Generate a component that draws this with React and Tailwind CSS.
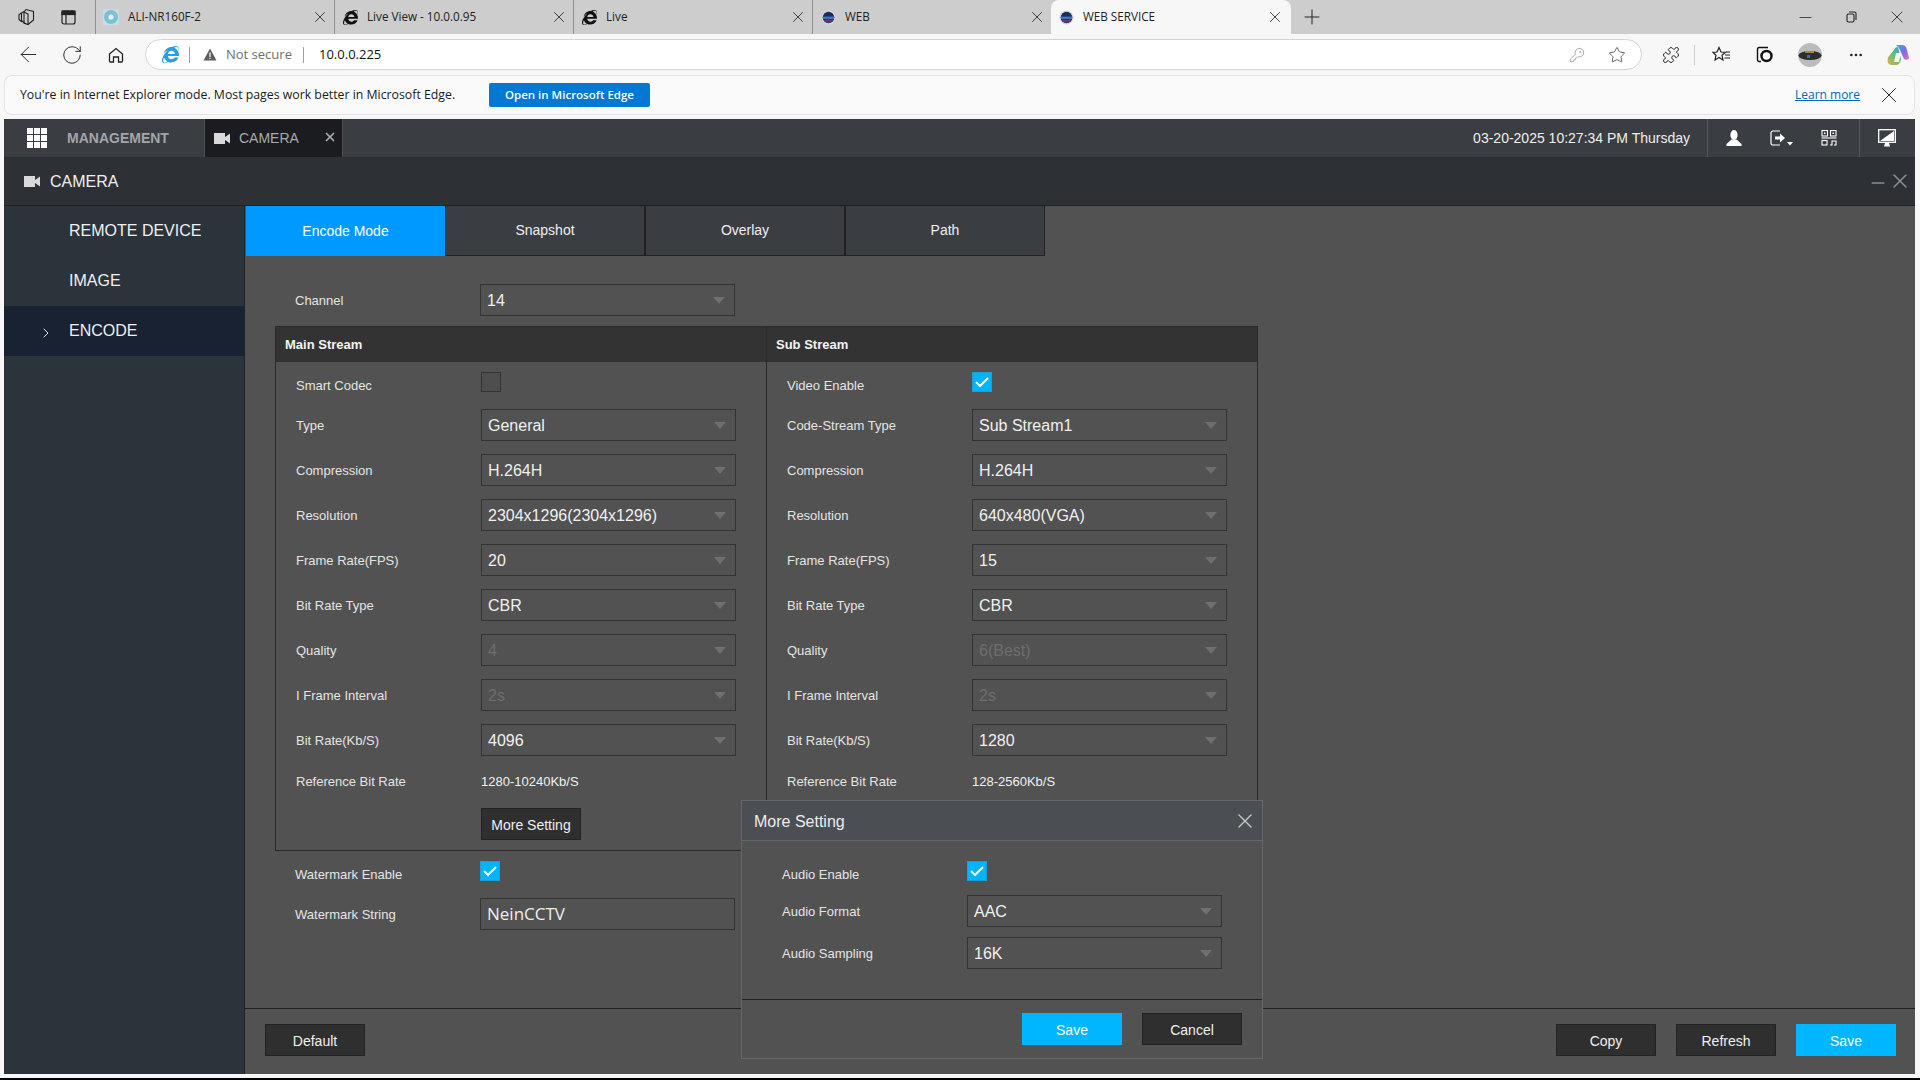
import { ArrowLeft, RotateCw, Plus, X, Minus, Star, KeyRound, Puzzle, ChevronRight, MoreHorizontal } from "lucide-react";
import { FaInternetExplorer } from "react-icons/fa";

const mainRows = [
  { label: "Type", value: "General" },
  { label: "Compression", value: "H.264H" },
  { label: "Resolution", value: "2304x1296(2304x1296)" },
  { label: "Frame Rate(FPS)", value: "20" },
  { label: "Bit Rate Type", value: "CBR" },
  { label: "Quality", value: "4", disabled: true },
  { label: "I Frame Interval", value: "2s", disabled: true },
  { label: "Bit Rate(Kb/S)", value: "4096" },
];

const subRows = [
  { label: "Code-Stream Type", value: "Sub Stream1" },
  { label: "Compression", value: "H.264H" },
  { label: "Resolution", value: "640x480(VGA)" },
  { label: "Frame Rate(FPS)", value: "15" },
  { label: "Bit Rate Type", value: "CBR" },
  { label: "Quality", value: "6(Best)", disabled: true },
  { label: "I Frame Interval", value: "2s", disabled: true },
  { label: "Bit Rate(Kb/S)", value: "1280" },
];

const SphereIcon = () => (
  <svg width="15" height="15" viewBox="0 0 16 16">
    <circle cx="8" cy="8" r="7.5" fill="#d8d8d8" />
    <circle cx="8" cy="8" r="6.2" fill="#1c2c58" />
    <rect x="2" y="7" width="12" height="2.5" fill="#3f78c8" />
    <path d="M2.5 10 a6 6 0 0 0 11 0z" fill="#5b3a6e" />
  </svg>
);

const DiscIcon = () => (
  <svg width="16" height="16" viewBox="0 0 16 16">
    <rect width="16" height="16" fill="#c8dde3" />
    <circle cx="8" cy="8" r="7" fill="#7cc0d4" />
    <circle cx="8" cy="8" r="2.6" fill="#e6eef0" />
  </svg>
);

const BrowserTab = ({ icon, title, active }) => (
  <div
    className={
      active
        ? "w-[240px] h-[34px] flex items-center pl-[6px] pr-[7px] bg-[#f7f7f7] rounded-t-lg"
        : "w-[239px] h-[34px] flex items-center pl-[6px] pr-[5px] border-l border-[#8f8f8f] bg-clip-content"
    }
  >
    <div className="w-[18px] flex justify-center">{icon}</div>
    <span className="flex-1 ml-[8px] text-[11.7px] text-[#222222]">{title}</span>
    <X size={18} strokeWidth={1.1} className="text-[#222222]" />
  </div>
);

const BrowserChrome = () => (
  <div className="h-[119px] font-['Open_Sans',sans-serif]">
    <div className="h-[34px] bg-[#cdcdcd] flex items-center">
      <div className="w-[95px] flex items-center pl-[17px] gap-[26px]">
        <svg width="18" height="18" viewBox="0 0 18 18" fill="none" stroke="#222222" strokeWidth="1.1">
          <path d="M7 4 L9 1.5 L16.5 3.5 V12 L11 16.5 L7 15 Z" />
          <path d="M7 4 L11 6 V16.5" />
          <path d="M7 3.5 L4.5 5 V12.5 L8 15.5" />
          <path d="M4.5 5 L2 6.5 V11.5 L5 14" />
        </svg>
        <svg width="15" height="15" viewBox="0 0 15 15" fill="none" stroke="#222222" strokeWidth="1.2">
          <rect x="1" y="1" width="13" height="13" rx="2" />
          <rect x="1" y="1" width="13" height="3.5" fill="#222222" />
          <path d="M5 4.5 V14" />
        </svg>
      </div>
      <BrowserTab icon={<DiscIcon />} title="ALI-NR160F-2" />
      <BrowserTab icon={<FaInternetExplorer size={15} className="text-[#111111]" />} title="Live View - 10.0.0.95" />
      <BrowserTab icon={<FaInternetExplorer size={15} className="text-[#111111]" />} title="Live" />
      <BrowserTab icon={<SphereIcon />} title="WEB" />
      <BrowserTab icon={<SphereIcon />} title="WEB SERVICE" active />
      <Plus size={24} strokeWidth={1} className="ml-[9px] text-[#222222]" />
      <div className="flex-1" />
      <div className="flex items-center text-[#222222]">
        <div className="w-[46px] flex justify-center">
          <Minus size={19} strokeWidth={1} />
        </div>
        <div className="w-[46px] flex justify-center">
          <svg width="11" height="12" viewBox="0 0 11 12" fill="none" stroke="#222222" strokeWidth="1.1">
            <rect x="1" y="3" width="7" height="8" rx="1.5" />
            <path d="M3 1 H8.5 A1.5 1.5 0 0 1 10 2.5 V9" />
          </svg>
        </div>
        <div className="w-[46px] flex justify-center">
          <X size={20} strokeWidth={1} />
        </div>
      </div>
    </div>
    <div className="h-[41px] bg-[#f7f7f7] flex items-center">
      <div className="w-[145px] flex items-center pl-[6px] text-[#222222]">
        <div className="w-[44px] flex justify-center">
          <ArrowLeft size={25} strokeWidth={0.9} />
        </div>
        <div className="w-[44px] flex justify-center">
          <RotateCw size={22} strokeWidth={1} />
        </div>
        <div className="w-[44px] flex justify-center">
          <svg width="18" height="18" viewBox="0 0 18 18" fill="none" stroke="#222222" strokeWidth="1.3">
            <path d="M2.5 8 L9 2.5 L15.5 8 V15 A1 1 0 0 1 14.5 16 H11.5 V11 H6.5 V16 H3.5 A1 1 0 0 1 2.5 15z" />
          </svg>
        </div>
      </div>
      <div className="w-[1497px] h-[31px] bg-white border border-[#d4d4d4] rounded-full flex items-center">
        <div className="w-[33px] flex justify-end">
          <FaInternetExplorer size={17} className="text-[#2a9fe0]" />
        </div>
        <div className="w-px h-[16px] bg-[#a0a0a0] ml-[10px]" />
        <svg className="ml-[13px]" width="14" height="13" viewBox="0 0 14 13">
          <path d="M7 0.5 L13.5 12.5 H0.5z" fill="#5e5e5e" />
          <rect x="6.4" y="4.5" width="1.2" height="4.5" fill="#ffffff" />
          <rect x="6.4" y="9.8" width="1.2" height="1.2" fill="#ffffff" />
        </svg>
        <span className="ml-[9px] w-[77px] text-[13px] text-[#6e6e6e]">Not secure</span>
        <div className="w-px h-[16px] bg-[#a0a0a0]" />
        <span className="ml-[15px] text-[13px] text-[#111111]">10.0.0.225</span>
        <div className="flex-1" />
        <KeyRound size={16} strokeWidth={1.1} className="text-[#8a8a8a]" />
        <Star size={18} strokeWidth={1.1} className="ml-[23px] mr-[15px] text-[#444444]" />
      </div>
      <div className="flex-1 flex items-center text-[#222222]">
        <Puzzle size={18} strokeWidth={1.3} className="ml-[20px]" />
        <div className="w-px h-[20px] bg-[#cfcfcf] ml-[14px]" />
        <svg className="ml-[17px]" width="19" height="17" viewBox="0 0 19 17" fill="none" stroke="#222222" strokeWidth="1.2">
          <path d="M7 1.5 L9 6 L13.5 6.3 L10 9.3 L11 14 L7 11.5 L3 14 L4 9.3 L0.8 6.3 L5 6z" />
          <path d="M13 9 H18 M12.5 12 H18 M14 6 H18" />
        </svg>
        <svg className="ml-[25px]" width="17" height="17" viewBox="0 0 17 17" fill="none" stroke="#111111" strokeWidth="1.4">
          <path d="M5 15.5 H3 A1.5 1.5 0 0 1 1.5 14 V3 A1.5 1.5 0 0 1 3 1.5 H12" />
          <circle cx="10.5" cy="10" r="5" strokeWidth="2.4" />
        </svg>
        <svg className="ml-[25px]" width="24" height="24" viewBox="0 0 24 24">
          <circle cx="12" cy="12" r="12" fill="#bcbcbc" />
          <ellipse cx="12" cy="12.5" rx="11.5" ry="4.5" fill="#2e2e2e" />
          <rect x="7" y="8" width="9" height="2" fill="#9a8a3a" />
          <rect x="9" y="12" width="3" height="3" fill="#3c6ea8" />
        </svg>
        <MoreHorizontal size={16} className="ml-[26px]" />
        <svg className="ml-[23px]" width="22" height="22" viewBox="0 0 22 22">
          <defs>
            <linearGradient id="cop" x1="0" y1="0" x2="1" y2="1">
              <stop offset="0" stopColor="#2fb6e8" />
              <stop offset="0.5" stopColor="#7a6ee6" />
              <stop offset="1" stopColor="#ef6aa8" />
            </linearGradient>
            <linearGradient id="cop2" x1="0" y1="1" x2="1" y2="0">
              <stop offset="0" stopColor="#f5a742" />
              <stop offset="0.5" stopColor="#5fc46a" />
              <stop offset="1" stopColor="#2f9fe8" />
            </linearGradient>
          </defs>
          <path d="M9 1 H15 Q19 1 20 6 L22 14 Q21 17 17 15 L13 6 Q12 3 9 1z" fill="url(#cop)" />
          <path d="M7 6 Q8 3 11 3 L14 15 Q13 21 9 21 H5 Q1 21 0.5 17 Q0 14 2 12z" fill="url(#cop2)" />
          <path d="M9 9 H14 L12 18 H7z" fill="#ffffff" opacity="0.9" />
        </svg>
      </div>
    </div>
    <div className="h-[40px] mx-[4px] mr-[5px] bg-[#fafafa] border border-[#e4e4e4] rounded-lg flex items-center">
      <span className="ml-[15px] w-[469px] text-[12.3px] text-[#1a1a1a]">You're in Internet Explorer mode. Most pages work better in Microsoft Edge.</span>
      <div className="w-[161px] h-[24px] bg-[#0078d4] rounded-[2px] flex items-center justify-center text-[11.5px] text-white font-semibold">Open in Microsoft Edge</div>
      <div className="flex-1" />
      <span className="text-[12px] text-[#0066bf] underline">Learn more</span>
      <X size={26} strokeWidth={0.9} className="ml-[16px] mr-[12px] text-[#222222]" />
    </div>
    <div className="h-[4px]" />
  </div>
);

const CameraIcon = ({ className }) => (
  <svg className={className} width="16" height="11" viewBox="0 0 16 11" fill="#d9d9d9">
    <rect x="0" y="0" width="11" height="11" />
    <path d="M11 4 L16 0.5 V10.5 L11 7z" />
  </svg>
);

const AppNav = () => (
  <div className="h-[38px] bg-[#3a3e42] flex items-stretch">
    <div className="w-[200px] flex items-center pl-[23px]">
      <div className="grid grid-cols-3 gap-[1px] w-[20px] h-[20px]">
        {[0, 1, 2, 3, 4, 5, 6, 7, 8].map((i) => (
          <div key={i} className="bg-white" />
        ))}
      </div>
      <span className="ml-[20px] pt-[1px] text-[14px] font-bold text-[#a3a5a7]">MANAGEMENT</span>
    </div>
    <div className="w-[139px] bg-[#1b1c1f] border-x border-[#4d5155] flex items-center pl-[9px]">
      <CameraIcon />
      <span className="ml-[9px] pt-[1px] text-[14px] text-[#a8aaac] flex-1">CAMERA</span>
      <X size={14} strokeWidth={3} className="mr-[5px] mb-[2px] text-[#a8aaac]" />
    </div>
    <div className="flex-1 flex items-center justify-end pr-[17px] text-[14px] text-[#eeeeee]">03-20-2025 10:27:34 PM Thursday</div>
    <div className="w-[153px] border-x border-[#55595d] flex items-center text-white">
      <svg className="ml-[18px]" width="16" height="16" viewBox="0 0 16 16" fill="#ffffff">
        <ellipse cx="8" cy="5" rx="3.6" ry="5" />
        <path d="M5.5 9.5 L0.5 14 V16 H15.5 V14 L10.5 9.5z" />
      </svg>
      <svg className="ml-[28px]" width="24" height="16" viewBox="0 0 24 16" fill="none" stroke="#ffffff" strokeWidth="1.2">
        <path d="M10 1 H3 A2 2 0 0 0 1 3 V13 A2 2 0 0 0 3 15 H10" />
        <path d="M5 6.5 H10 V3.5 L15 8 L10 12.5 V9.5 H5z" fill="#ffffff" stroke="none" />
        <path d="M17 12 H23 L20 15.5z" fill="#ffffff" stroke="none" />
      </svg>
      <svg className="ml-[27px]" width="16" height="16" viewBox="0 0 16 16" fill="none" stroke="#ffffff" strokeWidth="1.1">
        <rect x="1" y="0.5" width="5.5" height="5.5" />
        <rect x="9.5" y="0.5" width="5.5" height="5.5" />
        <rect x="3" y="2.5" width="1.5" height="1.5" fill="#ffffff" stroke="none" />
        <rect x="11.5" y="2.5" width="1.5" height="1.5" fill="#ffffff" stroke="none" />
        <path d="M0.5 8 H15.5" />
        <rect x="1" y="10.5" width="5" height="4.5" />
        <path d="M9 15 H11 V11 H15 V15 H13" />
      </svg>
    </div>
    <div className="flex-1 max-w-[55px] flex items-center justify-center pr-[2px]">
      <svg width="18" height="18" viewBox="0 0 18 18" fill="none">
        <rect x="0.7" y="0.7" width="16.6" height="12.6" stroke="#ffffff" strokeWidth="1.3" />
        <path d="M2 12 L16 2 V12z" fill="#ffffff" />
        <path d="M7 14 H11 L12 17.5 H6z" fill="#ffffff" />
      </svg>
    </div>
  </div>
);

const SelectBox = ({ value, disabled }) => (
  <div className="w-[255px] h-[32px] border border-[#333333] flex items-center pl-[6px] pr-[9px] text-[16px] justify-between">
    <span className={"pt-[1px] " + (disabled ? "text-[#6e6e6e]" : "text-[#f0f0f0]")}>{value}</span>
    <svg width="12" height="7" viewBox="0 0 12 7">
      <path d="M0 0 H12 L6 7z" fill="#6f6f6f" />
    </svg>
  </div>
);

const CheckBox = ({ checked }) =>
  checked ? (
    <div className="w-[20px] h-[20px] bg-[#00b4ff] border border-[#1d9fd6] flex items-center justify-center">
      <svg width="14" height="10" viewBox="0 0 14 10" fill="none" stroke="#ffffff" strokeWidth="2">
        <path d="M1 5 L5 9 L13 1" />
      </svg>
    </div>
  ) : (
    <div className="w-[20px] h-[20px] bg-[#4e4e4e] border border-[#333333]" />
  );

const Label = ({ children }) => <span className="w-[185px] shrink-0 pt-[1px] text-[13px] text-[#e4e4e4]">{children}</span>;

const CheckRow = ({ label, checked }) => (
  <div className="flex items-start h-[20px]">
    <span className="w-[185px] shrink-0 text-[13px] leading-[15px] pt-[6px] text-[#e4e4e4]">{label}</span>
    <CheckBox checked={checked} />
  </div>
);

const DarkButton = ({ children }) => (
  <div className="w-[100px] h-[32px] pt-[2px] bg-[#2f2f2f] border border-[#222222] flex items-center justify-center text-[14px] text-[#f0f0f0]">
    {children}
  </div>
);

const BlueButton = ({ children }) => (
  <div className="w-[100px] h-[32px] pt-[2px] bg-[#00b7ff] flex items-center justify-center text-[14px] text-white">{children}</div>
);

const StreamColumn = ({ title, checkLabel, checked, rows, refRate, more }) => (
  <div className="w-[490px]">
    <div className="h-[35px] bg-[#333333] pl-[9px] flex items-center text-[13px] font-bold text-[#f4f4f4]">{title}</div>
    <div className="pt-[10px] pl-[20px]">
      <CheckRow label={checkLabel} checked={checked} />
      <div className="mt-[17px] flex flex-col gap-[13px]">
        {rows.map((r) => (
          <div key={r.label} className="flex items-center">
            <Label>{r.label}</Label>
            <SelectBox value={r.value} disabled={r.disabled} />
          </div>
        ))}
      </div>
      <div className="mt-[13px] h-[24px] flex items-center">
        <Label>Reference Bit Rate</Label>
        <span className="pt-[1px] text-[13px] text-[#f0f0f0]">{refRate}</span>
      </div>
      <div className="mt-[15px] h-[32px] pl-[185px]">{more && <DarkButton>More Setting</DarkButton>}</div>
      <div className="h-[10px]" />
    </div>
  </div>
);

const MoreSettingDialog = () => (
  <div className="absolute left-[741px] top-[800px] w-[522px] h-[259px] bg-[#525252] border border-[#62666e] flex flex-col">
    <div className="h-[40px] bg-[#4b4f54] border-b border-[#62666e] flex items-center justify-between pl-[12px] pr-[5px] text-[16px] text-[#ececec]">
      <span className="pt-[2px]">More Setting</span>
      <X size={24} strokeWidth={1.4} className="text-[#c4c4c4]" />
    </div>
    <div className="flex-1 pt-[20px] pl-[40px]">
      <CheckRow label="Audio Enable" checked />
      <div className="mt-[14px] flex items-center">
        <Label>Audio Format</Label>
        <SelectBox value="AAC" />
      </div>
      <div className="mt-[10px] flex items-center">
        <Label>Audio Sampling</Label>
        <SelectBox value="16K" />
      </div>
    </div>
    <div className="h-[59px] border-t border-[#222222] flex justify-end gap-[20px] pt-[13px] pr-[20px]">
      <BlueButton>Save</BlueButton>
      <DarkButton>Cancel</DarkButton>
    </div>
  </div>
);

const sideItems = ["REMOTE DEVICE", "IMAGE", "ENCODE"];
const topTabs = ["Encode Mode", "Snapshot", "Overlay", "Path"];

const EncodePage = () => (
  <div className="flex-1 min-w-0 bg-[#525252] flex flex-col">
    <div className="flex h-[50px] pl-[1px]">
      {topTabs.map((t, i) => (
        <div
          key={t}
          className={
            i === 0
              ? "w-[199px] bg-[#0099ff] flex items-center justify-center text-[14px] text-white"
              : "w-[200px] bg-[#3a3e42] border border-[#222222] border-t-0 flex items-center justify-center text-[14px] text-[#eeeeee]"
          }
        >
          {t}
        </div>
      ))}
    </div>
    <div className="flex-1 pl-[50px] pt-[28px]">
      <div className="flex items-center">
        <Label>Channel</Label>
        <SelectBox value="14" />
      </div>
      <div className="mt-[10px] ml-[-20px] w-[983px] border border-[#2a2a2a] flex">
        <StreamColumn title="Main Stream" checkLabel="Smart Codec" rows={mainRows} refRate="1280-10240Kb/S" more />
        <div className="w-px bg-[#2a2a2a]" />
        <StreamColumn title="Sub Stream" checkLabel="Video Enable" checked rows={subRows} refRate="128-2560Kb/S" />
      </div>
      <div className="mt-[10px]">
        <CheckRow label="Watermark Enable" checked />
      </div>
      <div className="mt-[17px] flex items-center">
        <Label>Watermark String</Label>
        <div className="w-[255px] h-[32px] border border-[#333333] pl-[6px] flex items-center font-['Open_Sans',sans-serif] text-[17px] text-[#eeeeee]">NeinCCTV</div>
      </div>
    </div>
    <div className="h-[66px] border-t border-[#222222] flex items-start pt-[15px] px-[20px]">
      <DarkButton>Default</DarkButton>
      <div className="flex-1" />
      <div className="flex gap-[20px] mr-[-1px]">
        <DarkButton>Copy</DarkButton>
        <DarkButton>Refresh</DarkButton>
        <BlueButton>Save</BlueButton>
      </div>
    </div>
  </div>
);

export default function App() {
  return (
    <div className="relative w-[1920px] h-[1080px] overflow-hidden bg-[#f7f7f7] font-['Liberation_Sans',sans-serif]">
      <BrowserChrome />
      <div className="ml-[4px] mr-[5px] h-[955px] flex flex-col">
        <AppNav />
        <div className="h-[49px] bg-[#2d3135] flex items-center pl-[20px] pr-[3px] border-b border-[#1f2225]">
          <CameraIcon />
          <span className="ml-[10px] pt-[1px] text-[16px] text-[#f0f0f0]">CAMERA</span>
          <div className="flex-1" />
          <Minus size={20} strokeWidth={1.8} className="mt-[4px] text-[#8a8d90]" />
          <X size={24} strokeWidth={1.6} className="text-[#8a8d90]" />
        </div>
        <div className="flex-1 flex min-h-0">
          <div className="w-[241px] bg-[#2c343b] border-r border-[#1f2225]">
            {sideItems.map((s, i) => (
              <div key={s} className={(i === 2 ? "bg-[#182232] " : "") + "relative h-[50px] flex items-center pl-[65px] text-[16px] text-[#f0f0f0]"}>
                {i === 2 && <ChevronRight size={16} strokeWidth={1.5} className="absolute left-[34px] top-[19px] text-[#e0e0e0]" />}
                {s}
              </div>
            ))}
          </div>
          <EncodePage />
        </div>
      </div>
      <div className="h-[4px]" />
      <div className="h-[2px] bg-black" />
      <MoreSettingDialog />
    </div>
  );
}
